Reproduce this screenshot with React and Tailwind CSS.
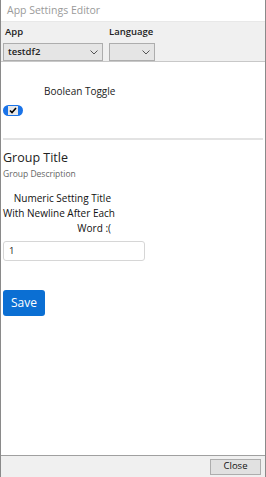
import React from "react";

export default function App() {
  const f = { fontFamily: '"Open Sans", "Noto Sans", sans-serif' };
  return (
    <div className="w-[266px] h-[477px] flex flex-col bg-white border-l border-r border-[#8a8a8a] overflow-hidden" style={f}>
      <div className="h-[21px] flex items-center px-[6px] bg-white text-[10.5px] text-[#9a9a9a]">App Settings Editor</div>
      <div className="h-[40px] bg-[#f0f0f0] flex gap-[6px] px-[2px] pt-[2px] border-t border-[#e8e8e8]">
        <div className="flex flex-col w-[100px]">
          <span className="text-[9.5px] font-semibold text-[#222] pl-[2px] h-[15px] leading-[15px]">App</span>
          <div className="mt-[4px] h-[19px] bg-[#e5e5e5] border border-[#adadad] flex items-center justify-between px-[4px]">
            <span className="text-[9.5px] font-semibold text-[#222]">testdf2</span>
            <svg width="8" height="5" viewBox="0 0 8 5"><path d="M0.5 0.5 L4 4 L7.5 0.5" fill="none" stroke="#555" strokeWidth="1" /></svg>
          </div>
        </div>
        <div className="flex flex-col w-[46px]">
          <span className="text-[9.5px] font-semibold text-[#222] h-[15px] leading-[15px]">Language</span>
          <div className="mt-[4px] h-[19px] bg-[#e5e5e5] border border-[#adadad] flex items-center justify-end px-[4px]">
            <svg width="8" height="5" viewBox="0 0 8 5"><path d="M0.5 0.5 L4 4 L7.5 0.5" fill="none" stroke="#555" strokeWidth="1" /></svg>
          </div>
        </div>
      </div>
      <div className="flex-1 flex flex-col border-t border-[#c8c8c8] px-[2px]">
        <div className="flex flex-col pt-[21px]">
          <span className="pl-[41px] text-[10px] text-[#222] h-[16px] leading-[16px]">Boolean Toggle</span>
          <div className="mt-[6px] w-[20px] h-[11px] rounded-full bg-[#1a73e8] flex items-center justify-center">
            <div className="w-[10px] h-[9px] bg-[#e8e8e8] flex items-center justify-center">
              <svg width="8" height="7" viewBox="0 0 8 7"><path d="M1 3.5 L3 5.5 L7 1" fill="none" stroke="#000" strokeWidth="1.6" /></svg>
            </div>
          </div>
        </div>
        <div className="mt-[22px] h-[2px] bg-[#e3e3e3]" />
        <div className="pt-[9px] text-[12.5px] text-[#222] leading-[18px]">Group Title</div>
        <div className="mt-[1px] text-[8.5px] text-[#666] leading-[12px]">Group Description</div>
        <div className="w-[108px] text-right text-[10px] font-medium text-[#111] leading-[15px] mt-[11px] whitespace-nowrap">
          Numeric Setting Title<br />With Newline After Each<br />Word :(
        </div>
        <div className="mt-[5px] w-[142px] h-[20px] border border-[#d6d6d6] rounded-[3px] flex items-center px-[5px] text-[9.5px] text-[#222]">1</div>
        <div className="mt-[29px] w-[42px] h-[26px] rounded-[3px] bg-[#0b6fd3] text-white text-[12px] flex items-center justify-center">Save</div>
      </div>
      <div className="h-[22px] bg-[#f0f0f0] border-t border-[#a0a0a0] flex items-center justify-end pr-[4px]">
        <div className="w-[51px] h-[16px] bg-[#e1e1e1] border border-[#adadad] text-[9.5px] text-[#111] flex items-center justify-center">Close</div>
      </div>
    </div>
  );
}
